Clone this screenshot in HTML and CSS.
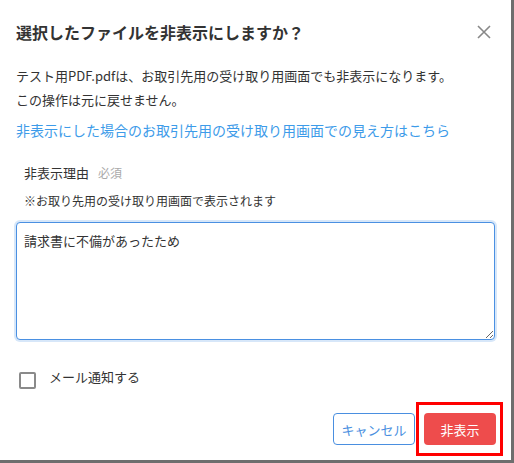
FILE: index.html
```html
<!DOCTYPE html>
<html lang="ja">
<head>
<meta charset="utf-8">
<link rel="stylesheet" href="styles.css">
</head>
<body>
<div class="dialog">
  <div class="header">
    <h1 class="title">選択したファイルを非表示にしますか？</h1>
    <button class="close" aria-label="閉じる">
      <svg width="14" height="14" viewBox="0 0 14 14"><path d="M1 1L13 13M13 1L1 13" stroke="#888" stroke-width="1.6" fill="none"/></svg>
    </button>
  </div>
  <p class="msg">テスト用PDF.pdfは、お取引先用の受け取り用画面でも非表示になります。<br>この操作は元に戻せません。</p>
  <a class="link" href="#">非表示にした場合のお取引先用の受け取り用画面での見え方はこちら</a>
  <div class="field-label">非表示理由<span class="req">必須</span></div>
  <div class="note">※お取り先用の受け取り用画面で表示されます</div>
  <textarea class="reason">請求書に不備があったため</textarea>
  <label class="check-row"><span class="checkbox"></span><span class="check-text">メール通知する</span></label>
  <div class="footer">
    <button class="btn btn-cancel">キャンセル</button>
    <span class="highlight"><button class="btn btn-hide">非表示</button></span>
  </div>
</div>
</body>
</html>
```
FILE: styles.css
```css
html, body {
  margin: 0;
  padding: 0;
  background: #6e6e6e;
}
body {
  width: 514px;
  height: 463px;
  overflow: hidden;
  font-family: "Noto Sans CJK JP", "Noto Sans", sans-serif;
  color: #333;
}
.dialog {
  width: 511px;
  height: 460px;
  box-sizing: border-box;
  background: #fff;
  padding: 0 16px;
  display: flex;
  flex-direction: column;
}
.header {
  height: 64px;
  display: flex;
  align-items: center;
  justify-content: space-between;
}
.title {
  margin: 0;
  font-size: 16px;
  font-weight: bold;
  line-height: 24px;
  color: #333;
}
.close {
  border: 0;
  background: none;
  padding: 0;
  margin-right: 4px;
  width: 14px;
  height: 14px;
  display: flex;
}
.msg {
  margin: 0;
  font-size: 13px;
  line-height: 24px;
  color: #333;
}
.link {
  margin-top: 6px;
  font-size: 14px;
  line-height: 24px;
  color: #3d9be9;
  text-decoration: none;
}
.field-label {
  margin-top: 21px;
  padding-left: 8px;
  font-size: 13px;
  line-height: 20px;
}
.req {
  margin-left: 9px;
  font-size: 12px;
  color: #aaa;
}
.note {
  margin-top: 8px;
  padding-left: 8px;
  font-size: 12px;
  line-height: 20px;
}
.reason {
  margin: 11px 0 0;
  width: 479px;
  height: 118px;
  box-sizing: border-box;
  border: 1px solid #4a90e2;
  border-radius: 4px;
  box-shadow: 0 0 0 2px rgba(74, 144, 226, 0.22);
  padding: 8px 7px;
  font-family: "Noto Sans CJK JP", "Noto Sans", sans-serif;
  font-size: 13px;
  line-height: 20px;
  color: #333;
  outline: none;
}
.check-row {
  margin-top: 28px;
  display: flex;
  align-items: center;
  height: 24px;
}
.checkbox {
  width: 17px;
  height: 17px;
  box-sizing: border-box;
  border: 2px solid #8a8a8a;
  border-radius: 2px;
  margin-left: 3px;
}
.check-text {
  margin-left: 13px;
  font-size: 13px;
  line-height: 20px;
  margin-top: -7px;
}
.footer {
  margin-top: 10px;
  margin-right: -8px;
  display: flex;
  justify-content: flex-end;
  align-items: center;
}
.btn {
  height: 32px;
  border-radius: 4px;
  font-family: "Noto Sans CJK JP", "Noto Sans", sans-serif;
  font-size: 13px;
  padding: 0;
  cursor: pointer;
}
.btn-cancel {
  width: 82px;
  background: #fff;
  border: 1px solid #4a8fe0;
  color: #4a8fe0;
}
.highlight {
  display: inline-flex;
  margin-left: 1px;
  border: 3px solid #ff0000;
  padding: 8px 4px 8px 5px;
}
.btn-hide {
  width: 72px;
  background: #ee4c4c;
  border: 0;
  color: #fff;
}
```
